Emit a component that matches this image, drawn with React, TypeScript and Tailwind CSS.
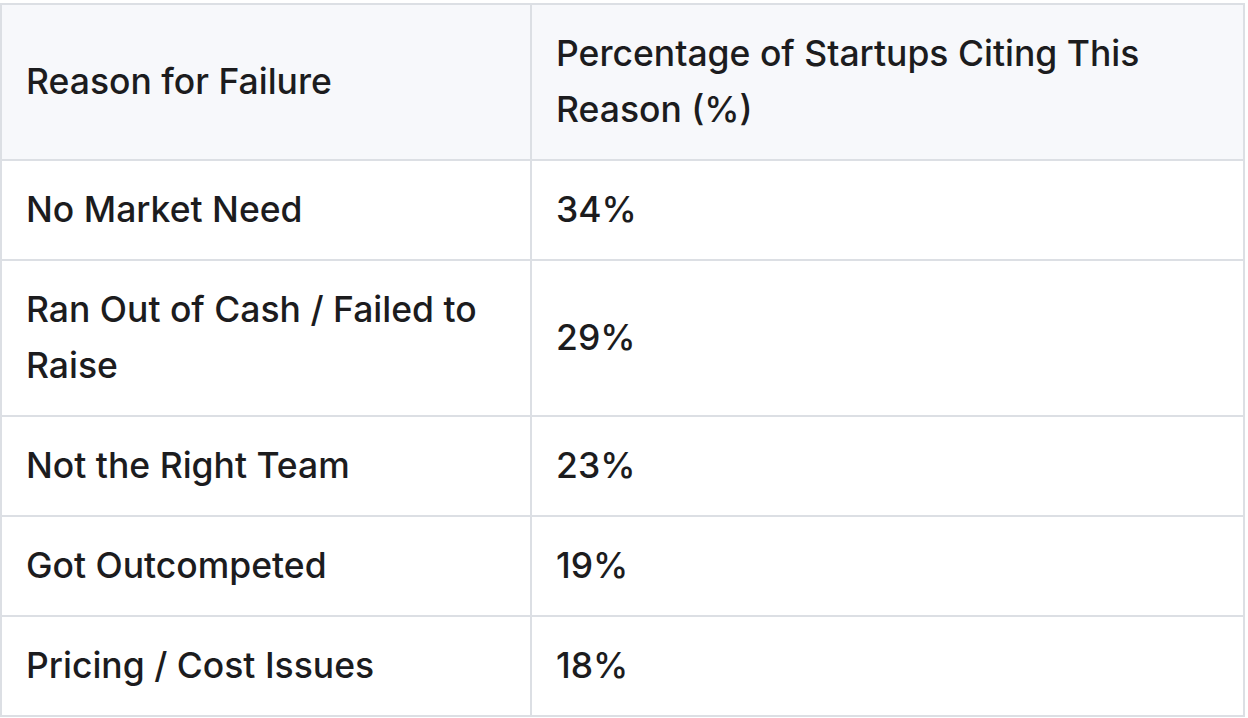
export default function App() {
  const rows: [string, string][] = [
    ["No Market Need", "34%"],
    ["Ran Out of Cash / Failed to Raise", "29%"],
    ["Not the Right Team", "23%"],
    ["Got Outcompeted", "19%"],
    ["Pricing / Cost Issues", "18%"],
  ];

  return (
    <div
      className="w-[1248px] h-[718px] bg-white pt-[3px] text-[#1c1c1e]"
      style={{ fontFamily: "Inter, 'Noto Sans', sans-serif" }}
    >
      <table className="w-[1245px] border-collapse border-2 border-[#dcdfe4] table-fixed text-[35.5px] leading-[56px] font-medium">
        <colgroup>
          <col className="w-[530px]" />
          <col />
        </colgroup>
        <thead>
          <tr className="bg-[#f7f8fb]">
            <th className="border-2 border-[#dcdfe4] px-6 py-[21px] text-left font-medium">
              Reason for Failure
            </th>
            <th className="border-2 border-[#dcdfe4] px-6 py-[21px] text-left font-medium">
              Percentage of Startups Citing This Reason (%)
            </th>
          </tr>
        </thead>
        <tbody>
          {rows.map(([reason, pct]) => (
            <tr key={reason}>
              <td className="border-2 border-[#dcdfe4] px-6 py-[21px]">{reason}</td>
              <td className="border-2 border-[#dcdfe4] px-6 py-[21px]">{pct}</td>
            </tr>
          ))}
        </tbody>
      </table>
    </div>
  );
}
